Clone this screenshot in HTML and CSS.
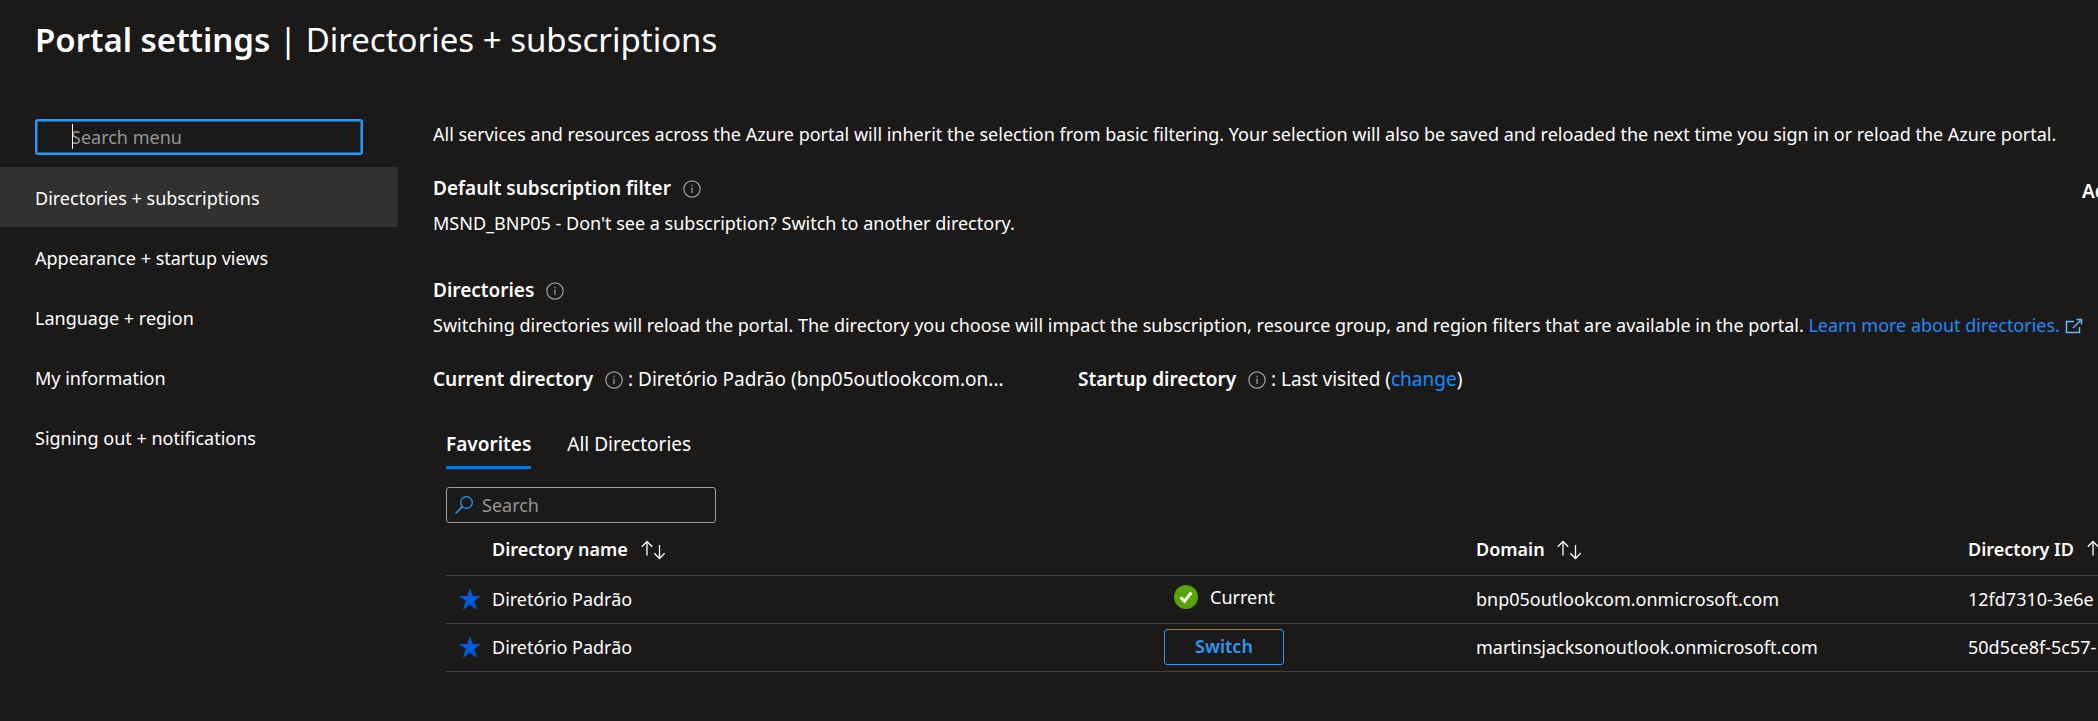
FILE: index.html
```html
<!DOCTYPE html>
<html lang="en">
<head>
    <meta charset="UTF-8">
    <meta name="viewport" content="width=device-width, initial-scale=1.0">
    <title>Portal settings | Directories + subscriptions</title>
    <link rel="stylesheet" href="styles.css">
</head>
<body>
    <!-- Shared icons -->
    <svg class="sprite" aria-hidden="true">
        <symbol id="icon-info" viewBox="0 0 18 18">
            <circle cx="9" cy="9" r="8.2" fill="none" stroke="currentColor" stroke-width="1.2"/>
            <path d="M9 7.4v5.6M9 4.8v1.4" fill="none" stroke="currentColor" stroke-width="1.2"/>
        </symbol>
        <symbol id="icon-sort" viewBox="0 0 24 20">
            <path d="M6 15.500V1.500M.8 6.800L6 1.500l5.200 5.300M18.500 5v13.500M13.300 13.200l5.200 5.300 5.200-5.300" fill="none" stroke="currentColor" stroke-width="1.300"/>
        </symbol>
        <symbol id="icon-star" viewBox="0 0 22 22">
            <path d="M11 0l2.700 7.900H22l-6.700 5.200L18 22l-7-5.200L4 22l2.700-8.900L0 7.900h8.300z" fill="currentColor"/>
        </symbol>
    </svg>

    <header class="header">
        <h1 class="title"><strong>Portal settings</strong> | Directories + subscriptions</h1>
    </header>

    <div class="layout">
        <nav class="sidebar">
            <div class="menu-search">
                <input class="menu-input" type="text" placeholder="Search menu" aria-label="Search menu">
            </div>
            <a class="menu-item active" href="#">Directories + subscriptions</a>
            <a class="menu-item" href="#">Appearance + startup views</a>
            <a class="menu-item" href="#">Language + region</a>
            <a class="menu-item" href="#">My information</a>
            <a class="menu-item" href="#">Signing out + notifications</a>
        </nav>

        <main class="content">
            <p class="intro">All services and resources across the Azure portal will inherit the selection from basic filtering. Your selection will also be saved and reloaded the next time you sign in or reload the Azure portal.</p>

            <section class="section filter">
                <div class="filter-main">
                    <h2 class="heading">Default subscription filter <svg class="info"><use href="#icon-info"/></svg></h2>
                    <p>MSND_BNP05 - Don't see a subscription? Switch to another directory.</p>
                </div>
                <h2 class="heading advanced">Advanced filters</h2>
            </section>

            <section class="section directories-intro">
                <h2 class="heading">Directories <svg class="info"><use href="#icon-info"/></svg></h2>
                <p>Switching directories will reload the portal. The directory you choose will impact the subscription, resource group, and region filters that are available in the portal. <a class="link" href="#">Learn more about directories.</a> <svg class="external" viewBox="0 0 18 18"><path d="M9 3.500H1.500v11h13V9M8 10l8-8M11.500 1.500h5v5" fill="none" stroke="currentColor" stroke-width="1.500"/></svg></p>
            </section>

            <div class="current">
                <p class="current-item"><strong>Current directory</strong> <svg class="info"><use href="#icon-info"/></svg> : Diretório Padrão (bnp05outlookcom.on...</p>
                <p class="current-item"><strong>Startup directory</strong> <svg class="info"><use href="#icon-info"/></svg> : Last visited (<a class="link" href="#">change</a>)</p>
            </div>

            <div class="directories">
                <div class="tabs" role="tablist">
                    <button class="tab selected" role="tab" aria-selected="true">Favorites</button>
                    <button class="tab" role="tab" aria-selected="false">All Directories</button>
                </div>

                <label class="search">
                    <svg class="search-icon" viewBox="0 0 18 18"><circle cx="11.500" cy="6.500" r="5.800" fill="none" stroke="currentColor" stroke-width="1.300"/><path d="M7.400 10.600L.5 17.500" stroke="currentColor" stroke-width="1.500"/></svg>
                    <input class="search-input" type="text" placeholder="Search" aria-label="Search directories">
                </label>

                <table class="table">
                    <thead>
                        <tr>
                            <th class="col-star"></th>
                            <th class="col-name">Directory name <svg class="sort"><use href="#icon-sort"/></svg></th>
                            <th class="col-status"></th>
                            <th class="col-domain">Domain <svg class="sort"><use href="#icon-sort"/></svg></th>
                            <th class="col-id">Directory ID <svg class="sort"><use href="#icon-sort"/></svg></th>
                        </tr>
                    </thead>
                    <tbody>
                        <tr>
                            <td class="col-star"><svg class="star"><use href="#icon-star"/></svg></td>
                            <td>Diretório Padrão</td>
                            <td>
                                <span class="status">
                                    <svg class="check" viewBox="0 0 24 24"><circle cx="12" cy="12" r="12" fill="#57a300"/><path d="M6.500 12.300l4 4L17.300 7.500" fill="none" stroke="#fff" stroke-width="3"/></svg>
                                    Current
                                </span>
                            </td>
                            <td>bnp05outlookcom.onmicrosoft.com</td>
                            <td>12fd7310-3e6e</td>
                        </tr>
                        <tr>
                            <td class="col-star"><svg class="star"><use href="#icon-star"/></svg></td>
                            <td>Diretório Padrão</td>
                            <td><button class="switch">Switch</button></td>
                            <td>martinsjacksonoutlook.onmicrosoft.com</td>
                            <td>50d5ce8f-5c57-</td>
                        </tr>
                    </tbody>
                </table>
            </div>
        </main>
    </div>
</body>
</html>
```
FILE: styles.css
```css
* {
    box-sizing: border-box;
}
body {
    margin: 0;
    min-height: 100vh;
    overflow: hidden;
    background: #1b1a19;
    color: #fff;
    font-family: "Segoe UI", "Noto Sans", "Open Sans", sans-serif;
    font-size: 18px;
    line-height: 24px;
}
h1, h2, p {
    margin: 0;
}
strong {
    font-weight: 600;
}
input, button {
    font: inherit;
}
.sprite {
    display: none;
}
.header {
    padding: 16px 35px 0;
}
.title {
    font-size: 33px;
    line-height: 48px;
    font-weight: 400;
}

/* Left menu */
.layout {
    display: flex;
    gap: 35px;
    padding-top: 55px;
}
.sidebar {
    flex: 0 0 398px;
}
.menu-search {
    position: relative;
    margin: 0 35px 12px 35px;
}
.menu-search::before {
    content: "";
    position: absolute;
    left: 37px;
    top: 5px;
    width: 1px;
    height: 25px;
    background: #fff;
}
.menu-input {
    display: block;
    width: 100%;
    height: 36px;
    padding: 0 34px;
    border: 2px solid #2899f5;
    border-radius: 3px;
    outline: none;
    background: #1b1a19;
    box-shadow: inset 0 0 0 1px #1c6099;
    color: #fff;
}
::placeholder {
    color: #979593;
    opacity: 1;
}
.menu-item {
    display: block;
    padding: 19px 35px 17px;
    color: #fff;
    text-decoration: none;
}
.menu-item.active {
    background: #323130;
}

/* Main area */
.content {
    flex: 1;
    min-width: 0;
    padding-top: 3px;
    white-space: nowrap;
}
.section {
    margin-top: 30px;
}
.directories-intro {
    margin-top: 43px;
}
.filter {
    display: flex;
    justify-content: space-between;
}
.advanced {
    flex: 0 0 16px;
    min-width: 0;
    padding-top: 3px;
}
.heading {
    margin-bottom: 11px;
    font-size: 19px;
    line-height: 24px;
    font-weight: 600;
}
.info {
    width: 18px;
    height: 18px;
    margin-left: 7px;
    vertical-align: -3px;
    color: #a19f9d;
}
.link {
    color: #1a8cff;
    text-decoration: none;
}
.external {
    width: 18px;
    height: 18px;
    vertical-align: -4px;
    color: #6cb8f6;
}
.current {
    display: flex;
    margin-top: 30px;
    font-size: 19px;
}
.current-item {
    flex: 0 0 645px;
}
.directories {
    padding-left: 13px;
}
.tabs {
    display: flex;
    gap: 36px;
    margin: 35px 0 18px;
}
.tab {
    padding: 6px 0 10px;
    border: 0;
    border-bottom: 3px solid transparent;
    background: none;
    color: #fff;
    font-size: 19px;
}
.tab.selected {
    border-color: #0078d4;
    font-weight: 600;
}
.search {
    display: flex;
    align-items: center;
    gap: 9px;
    width: 270px;
    height: 36px;
    padding: 0 8px;
    border: 1px solid #a19f9d;
    border-radius: 3px;
}
.search-icon {
    flex: none;
    width: 18px;
    height: 18px;
    color: #2899f5;
}
.search-input {
    width: 100%;
    padding: 0;
    border: 0;
    outline: none;
    background: none;
    color: #fff;
}

/* Directory list */
.table {
    width: 100%;
    table-layout: fixed;
    border-collapse: collapse;
}
.table th {
    height: 52px;
    padding: 0;
    border-bottom: 1px solid #484644;
    font-weight: 600;
    text-align: left;
}
.table td {
    height: 48px;
    padding: 0;
    border-bottom: 1px solid #484644;
}
.col-star {
    width: 46px;
    text-align: center;
}
.col-name {
    width: 672px;
}
.col-status {
    width: 312px;
}
.col-domain {
    width: 492px;
}
.sort {
    width: 24px;
    height: 20px;
    margin-left: 8px;
    vertical-align: -4px;
}
.star {
    display: block;
    width: 22px;
    height: 22px;
    margin-left: 13px;
    color: #015cda;
}
.status {
    display: flex;
    align-items: center;
    gap: 12px;
    padding: 0 0 4px 10px;
}
.check {
    width: 24px;
    height: 24px;
}
.switch {
    display: block;
    width: 120px;
    height: 36px;
    padding: 0 0 2px;
    border: 1px solid #2899f5;
    border-radius: 3px;
    background: none;
    color: #2899f5;
    font-weight: 600;
}
```
